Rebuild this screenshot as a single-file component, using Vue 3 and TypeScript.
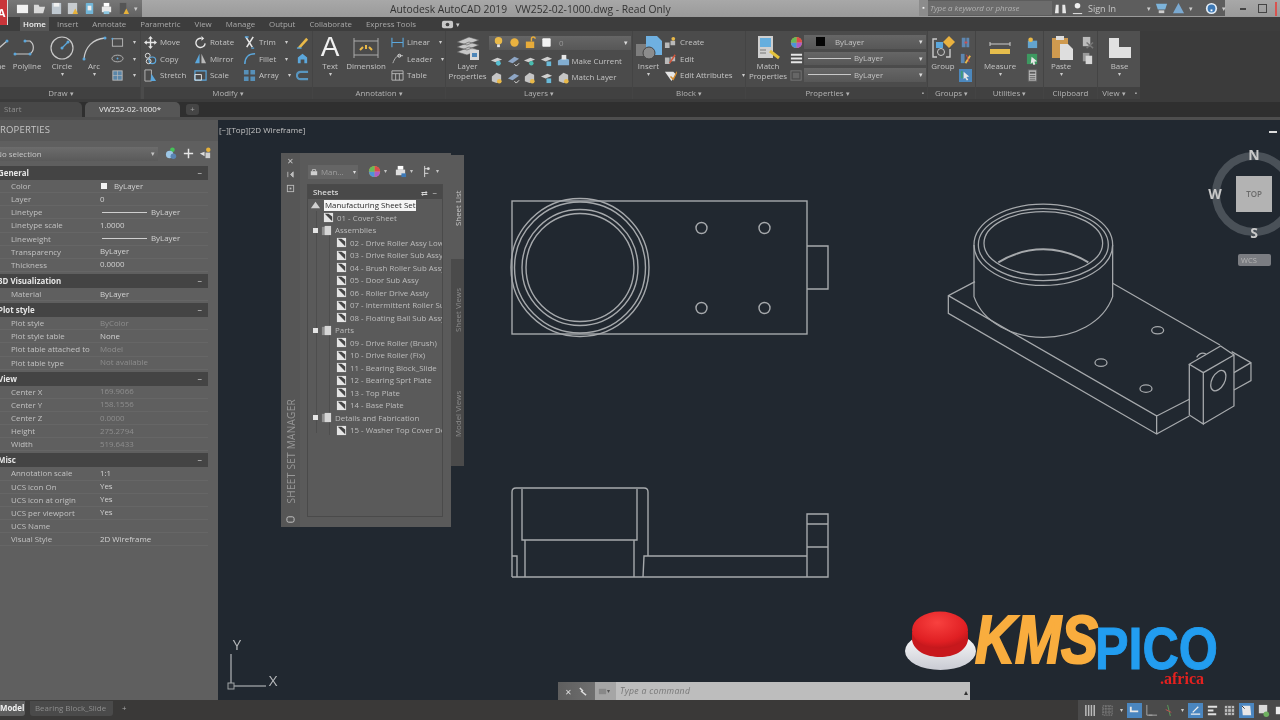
<script setup lang="ts">
const W = '#e6e6e6'
const G = '#b9b9b9'
const B = '#5ba7dc'
const Y = '#e9b949'
const i = (s: string) => s
const icons: Record<string, string> = {
  move: i(`<path d="M7 2v10M2 7h10" stroke="${W}" stroke-width="1.5"/><path d="M7 0l2.5 3h-5zM7 14l2.5-3h-5zM0 7l3-2.5v5zM14 7l-3-2.5v5z" fill="${W}"/>`),
  copy: i(`<circle cx="4" cy="4" r="2.6" fill="none" stroke="${W}"/><circle cx="9" cy="9" r="3.6" fill="none" stroke="${B}" stroke-width="1.3"/><circle cx="5" cy="10" r="2.6" fill="none" stroke="${W}"/>`),
  stretch: i(`<path d="M1 1h7v12H1z" fill="none" stroke="${G}"/><path d="M8 5l5 8H7z" fill="${B}"/>`),
  rotate: i(`<path d="M12 8a5 5 0 1 1-4-5.5" fill="none" stroke="${W}" stroke-width="1.5"/><path d="M8 0l3 2.7L8 5z" fill="${W}"/>`),
  mirror: i(`<path d="M6 2L1 12h5z" fill="${B}"/><path d="M8 2l5 10H8z" fill="${G}"/>`),
  scale: i(`<path d="M1 2h12v10H1z" fill="none" stroke="${B}" stroke-width="1.3"/><path d="M1 6h7v6H1z" fill="none" stroke="${W}"/>`),
  trim: i(`<path d="M3 1l7 11M11 1L4 12" stroke="${W}" stroke-width="1.7"/><path d="M2 1h4M9 13h3" stroke="${B}" stroke-width="1.5"/>`),
  fillet: i(`<path d="M2 13C2 6 6 2 13 2" fill="none" stroke="${B}" stroke-width="1.6"/>`),
  array: i(`<path d="M1 1h5v5H1zM8 1h5v5H8zM1 8h5v5H1zM8 8h5v5H8z" fill="${B}" opacity=".75"/>`),
  erase: i(`<path d="M3 11L11 2l2 2-8 9H2z" fill="${Y}"/><path d="M1 13h5" stroke="${B}" stroke-width="1.5"/>`),
  explode: i(`<path d="M2 12V6l5-4 5 4v6H9V8H5v4z" fill="${B}"/>`),
  offset: i(`<path d="M13 3H5a4 4 0 0 0 0 8h8" fill="none" stroke="${B}" stroke-width="2.4" opacity=".8"/>`),
  rect: i(`<rect x="1.5" y="3" width="11" height="8" fill="none" stroke="${G}"/><circle cx="1.5" cy="3" r="1" fill="${B}"/>`),
  ellipse: i(`<ellipse cx="7" cy="7" rx="6" ry="3.6" fill="none" stroke="${G}"/><circle cx="7" cy="7" r="1" fill="${B}"/>`),
  hatch: i(`<rect x="2" y="2" width="10" height="10" fill="#5b86a8" stroke="${G}"/><path d="M2 7h10M7 2v10" stroke="${G}" stroke-width=".7"/>`),
  linear: i(`<path d="M1 2v10M13 2v10M1 7h12" stroke="${B}" stroke-width="1.2"/>`),
  leader: i(`<path d="M2 12C4 7 6 4 9 4h4" fill="none" stroke="${G}"/><circle cx="9" cy="4" r="1.6" fill="none" stroke="${W}"/>`),
  table: i(`<path d="M1 2h12v10H1zM1 5h12M5 5v7M9 5v7" fill="none" stroke="${G}"/>`),
  bulbs: i(`<circle cx="7" cy="5" r="4" fill="${Y}"/><rect x="5.5" y="9" width="3" height="3" fill="${W}"/>`),
  sun: i(`<circle cx="7" cy="7" r="4.5" fill="#eab23f"/>`),
  lock: i(`<rect x="2" y="6" width="9" height="7" fill="#e8ac3a"/><path d="M8 6V3a2 2 0 0 1 4 0" fill="none" stroke="#e8ac3a" stroke-width="1.5"/>`),
  white: i(`<rect x="2.5" y="2.5" width="9" height="9" rx="1" fill="#f4f4f4"/>`),
  lay1: i(`<path d="M1 7l7-3 5 2-7 3z" fill="#cfcfcf"/><circle cx="9" cy="10" r="2.6" fill="#57bfd2"/>`),
  lay2: i(`<path d="M1 8l7-5 5 2-7 5z" fill="#8ea6c5"/><path d="M8 11l2 2 3-3" stroke="${W}" fill="none"/>`),
  lay3: i(`<path d="M1 7l7-3 5 2-7 3z" fill="#cfcfcf"/><circle cx="9" cy="10" r="2.4" fill="#49bdb0"/>`),
  lay4: i(`<path d="M1 6l7-3 5 2-7 3z" fill="#cfcfcf"/><rect x="7" y="8" width="5" height="5" fill="#69b9d8"/>`),
  lay5: i(`<path d="M2 6l5-4 5 2v7l-5 2-5-2z" fill="#c5c5c5"/><circle cx="10" cy="11" r="2.5" fill="${Y}"/>`),
  make: i(`<path d="M1 7l6-3 6 2v6H1z" fill="#82add0"/><rect x="5" y="1" width="5" height="5" fill="${W}"/>`),
  create: i(`<path d="M1 7h5v6H1zM7 5h5v5H7z" fill="${G}"/><circle cx="10" cy="3" r="2" fill="${Y}"/>`),
  edit: i(`<path d="M1 6h5v7H1zM7 5h5v5H7z" fill="${G}"/><path d="M6 12l6-9" stroke="#d4553a" stroke-width="1.6"/>`),
  attr: i(`<path d="M1 3h9l3 3-5 7z" fill="${W}"/><path d="M7 8l3 3 4-8" stroke="#d58c2b" stroke-width="1.5" fill="none"/>`),
  wheel: i(`<circle cx="7" cy="7" r="6" fill="#e8a23a"/><path d="M7 7V1a6 6 0 0 1 6 6z" fill="#d94c4c"/><path d="M7 7h6a6 6 0 0 1-6 6z" fill="#ad5cc9"/><path d="M7 7v6a6 6 0 0 1-6-6z" fill="#4d93d9"/><path d="M7 7H1a6 6 0 0 1 6-6z" fill="#67bb58"/>`),
  lines: i(`<path d="M1 3h12M1 7h12M1 11h12" stroke="${W}" stroke-width="2"/>`),
  ltype: i(`<rect x="1" y="2" width="11" height="10" fill="none" stroke="#777"/><rect x="3" y="4" width="7" height="6" fill="#666"/>`),
  g1: i(`<path d="M3 2h4v10H3zM8 2h3v10H8z" fill="#5e87b1"/><path d="M6 7h3" stroke="#d34d4d" stroke-width="2"/>`),
  g2: i(`<path d="M2 2h4v10H2z" fill="#5e87b1"/><path d="M7 12l5-8" stroke="${Y}" stroke-width="2"/><path d="M8 3l3 8" stroke="#cf4a4a"/>`),
  g3: i(`<rect width="14" height="14" fill="#4c88bd"/><path d="M5 3l6 5-3 .5 2 3-1.5 1-2-3L5 11z" fill="${W}"/><path d="M2 2h2v8H2z" fill="#3f9b77"/>`),
  u1: i(`<rect x="2" y="5" width="10" height="8" fill="#63a4cf"/><circle cx="5" cy="4" r="2.5" fill="${Y}"/>`),
  u2: i(`<rect x="1" y="2" width="11" height="11" fill="#3d9960"/><path d="M6 5l6 5-3 .5 1 3-2 .5-1-3-2 2z" fill="${W}"/>`),
  u3: i(`<rect x="2.5" y="1" width="9" height="12" fill="#bcbcbc" stroke="#666"/><rect x="4" y="3" width="6" height="2" fill="#5c5c5c"/><path d="M4 7h6M4 9h6M4 11h6" stroke="#666"/>`),
  c1: i(`<rect x="2" y="1" width="8" height="10" fill="#bbb"/><path d="M6 7l7 6M13 7l-7 6" stroke="#777" stroke-width="1.6"/>`),
  c2: i(`<rect x="2" y="1" width="7" height="9" fill="#999"/><rect x="5" y="4" width="7" height="9" fill="#d6d6d6"/>`),
  plus: i(`<path d="M7 2v10M2 7h10" stroke="${W}" stroke-width="1.6"/>`),
}

const qat = [
  `<path d="M1 3h12v9H1z" fill="#f1f1f1"/>`,
  `<path d="M1 3h5l1 2h6l-2 7H1z" fill="#d9d9d9"/>`,
  `<path d="M2 1h10v12H2z" fill="#bfc8d0"/><rect x="4" y="1" width="6" height="4" fill="#f0f0f0"/>`,
  `<path d="M2 1h10v12H2z" fill="#c7cbcf"/><path d="M7 13l3-6 3 6z" fill="#e6b13a"/>`,
  `<rect x="3" y="1" width="8" height="12" rx="1" fill="#72b6d8"/><rect x="5" y="4" width="4" height="5" fill="#eee"/>`,
  `<rect x="2" y="5" width="10" height="6" fill="#e8e8e8"/><rect x="4" y="1" width="6" height="4" fill="#fff"/><rect x="4" y="10" width="6" height="3" fill="#8cc6e0"/>`,
  `<rect x="3" y="1" width="7" height="12" fill="#555"/><path d="M7 13l3-6 3 6z" fill="#e6b13a"/>`,
]

const tabs = ['Insert', 'Annotate', 'Parametric', 'View', 'Manage', 'Output', 'Collaborate', 'Express Tools']

interface Row { l: string; v?: string; dim?: boolean; kind?: 'swatch' | 'line' }
interface Section { t: string; rows: Row[] }
const sections: Section[] = [
  { t: 'General', rows: [
    { l: 'Color', v: 'ByLayer', kind: 'swatch' }, { l: 'Layer', v: '0' },
    { l: 'Linetype', v: 'ByLayer', kind: 'line' }, { l: 'Linetype scale', v: '1.0000' },
    { l: 'Lineweight', v: 'ByLayer', kind: 'line' }, { l: 'Transparency', v: 'ByLayer' }, { l: 'Thickness', v: '0.0000' },
  ] },
  { t: '3D Visualization', rows: [{ l: 'Material', v: 'ByLayer' }] },
  { t: 'Plot style', rows: [
    { l: 'Plot style', v: 'ByColor', dim: true }, { l: 'Plot style table', v: 'None' },
    { l: 'Plot table attached to', v: 'Model', dim: true }, { l: 'Plot table type', v: 'Not available', dim: true },
  ] },
  { t: 'View', rows: [
    { l: 'Center X', v: '169.9066', dim: true }, { l: 'Center Y', v: '158.1556', dim: true }, { l: 'Center Z', v: '0.0000', dim: true },
    { l: 'Height', v: '275.2794', dim: true }, { l: 'Width', v: '519.6433', dim: true },
  ] },
  { t: 'Misc', rows: [
    { l: 'Annotation scale', v: '1:1' }, { l: 'UCS icon On', v: 'Yes' }, { l: 'UCS icon at origin', v: 'Yes' },
    { l: 'UCS per viewport', v: 'Yes' }, { l: 'UCS Name', v: '' }, { l: 'Visual Style', v: '2D Wireframe' },
  ] },
]

interface Node { t: string; lvl: 1 | 2; kind: 'sheet' | 'group' }
const tree: Node[] = [
  { t: '01 - Cover Sheet', lvl: 1, kind: 'sheet' },
  { t: 'Assemblies', lvl: 1, kind: 'group' },
  { t: '02 - Drive Roller Assy Lower', lvl: 2, kind: 'sheet' },
  { t: '03 - Drive Roller Sub Assy', lvl: 2, kind: 'sheet' },
  { t: '04 - Brush Roller Sub Assy', lvl: 2, kind: 'sheet' },
  { t: '05 - Door Sub Assy', lvl: 2, kind: 'sheet' },
  { t: '06 - Roller Drive Assly', lvl: 2, kind: 'sheet' },
  { t: '07 - Intermittent Roller Sub', lvl: 2, kind: 'sheet' },
  { t: '08 - Floating Ball Sub Assy', lvl: 2, kind: 'sheet' },
  { t: 'Parts', lvl: 1, kind: 'group' },
  { t: '09 - Drive Roller (Brush)', lvl: 2, kind: 'sheet' },
  { t: '10 - Drive Roller (Fix)', lvl: 2, kind: 'sheet' },
  { t: '11 - Bearing Block_Slide', lvl: 2, kind: 'sheet' },
  { t: '12 - Bearing Sprt Plate', lvl: 2, kind: 'sheet' },
  { t: '13 - Top Plate', lvl: 2, kind: 'sheet' },
  { t: '14 - Base Plate', lvl: 2, kind: 'sheet' },
  { t: 'Details and Fabrication', lvl: 1, kind: 'group' },
  { t: '15 - Washer Top Cover Detail', lvl: 2, kind: 'sheet' },
]

const holes: [number, number][] = [[701.5, 228], [764.5, 228], [701.5, 308], [764.5, 308]]
const rings = [69, 65.5, 58, 54]

const statusIcons = [
  `<path d="M2 1v12M5 1v12M8 1v12M11 1v12" stroke="#bbb" stroke-width="1.6"/>`,
  `<path d="M2 2h10v10H2zM2 5.3h10M2 8.7h10M5.3 2v10M8.7 2v10" fill="none" stroke="#999" stroke-dasharray="1 1"/>`,
  `<path d="M3 3v5h8" fill="none" stroke="#e8e8e8" stroke-width="2"/>`,
  `<path d="M2 1v11h11" fill="none" stroke="#aaa"/><path d="M4 12h4" stroke="#aaa"/>`,
  `<path d="M6 1l3 12" stroke="#5aa05a"/><path d="M4 6l6 3" stroke="#c45050"/>`,
  `<path d="M2 11h10M4 9l6-6" stroke="#eee" stroke-width="1.4"/>`,
  `<path d="M2 3h10M2 7h6M2 11h9" stroke="#e0e0e0" stroke-width="2"/>`,
  `<path d="M2 2h10v10H2z" fill="#bbb"/><path d="M2 5h10M2 9h10M5 2v10M9 2v10" stroke="#555"/>`,
  `<path d="M2 2h9l1 10H3z" fill="#e8e8e8"/><path d="M2 2l3 3" stroke="#333"/>`,
  `<rect x="2" y="1" width="9" height="9" fill="#d9d9d9"/><circle cx="10" cy="11" r="3" fill="#6db05f"/>`,
  `<rect x="2" y="3" width="10" height="8" fill="#ececec"/>`,
]
</script>

<template>
  <div class="app">
    <header class="chrome">
      <div class="titlebar">
        <div class="logo-a"><span>A</span></div>
        <div class="qat">
          <svg v-for="(q, k) in qat" :key="k" class="ico" viewBox="0 0 14 14" v-html="q" />
          <span class="drop">▾</span>
        </div>
        <div class="title">Autodesk AutoCAD 2019 &nbsp; VW252-02-1000.dwg - Read Only</div>
        <div class="search">
          <span class="grip">▪</span>
          <span class="search-box">Type a keyword or phrase</span>
          <div class="signin">
            <svg class="ico" viewBox="0 0 14 14"><path d="M2 3h3v9H1zM9 3h3l1 9H9z" fill="#e8e8e8"/></svg>
            <svg class="ico" viewBox="0 0 14 14"><circle cx="7" cy="4" r="3" fill="#eee"/><path d="M2 12h10v1H2z" fill="#eee"/></svg>
            <span class="signin-label">Sign In</span>
            <span class="drop">▾</span>
            <svg class="ico" viewBox="0 0 14 14"><path d="M1 2h12l-2 6H3z" fill="#7db4db"/><rect x="4" y="9" width="6" height="3" fill="#ccc"/></svg>
            <svg class="ico" viewBox="0 0 14 14"><path d="M7 1l6 11H1z" fill="#7aa9d1"/></svg>
            <span class="drop">▾</span>
            <svg class="ico help" viewBox="0 0 14 14"><circle cx="7" cy="7" r="6" fill="#e6eef5"/><circle cx="7" cy="7" r="4.2" fill="#3d79b6"/><path d="M6 10h2V8H6z" fill="#fff"/></svg>
            <span class="drop">▾</span>
          </div>
        </div>
        <div class="winctl">
          <span class="min"></span><span class="max"></span><span class="close"></span>
        </div>
      </div>

      <nav class="tabs">
        <span class="tab active">Home</span>
        <span v-for="t in tabs" :key="t" class="tab">{{ t }}</span>
        <svg class="ico tab-ico" viewBox="0 0 14 14"><rect x="1" y="3" width="12" height="8" rx="2" fill="#c9c9c9"/><circle cx="7" cy="7" r="2" fill="#444"/></svg>
        <span class="drop">▾</span>
      </nav>

      <section class="ribbon">
        <div class="panel p-draw">
          <div class="body">
            <div class="big b-line"><svg class="bigico" viewBox="0 0 30 26"><path d="M6 22L24 6" stroke="#c9c9c9" stroke-width="1.3"/><circle cx="24" cy="6" r="1.5" fill="#5ba7dc"/></svg><span>Line</span></div>
            <div class="big b-poly"><svg class="bigico" viewBox="0 0 30 26"><path d="M3 19h15a8 8 0 0 0 0-13h-5" fill="none" stroke="#c9c9c9" stroke-width="1.2"/><circle cx="3" cy="19" r="1.5" fill="#5ba7dc"/><circle cx="13" cy="6" r="1.5" fill="#5ba7dc"/><circle cx="18" cy="19" r="1.5" fill="#5ba7dc"/></svg><span>Polyline</span></div>
            <div class="big b-circle"><svg class="bigico" viewBox="0 0 30 26"><circle cx="15" cy="13" r="11" fill="none" stroke="#c9c9c9" stroke-width="1.2"/><path d="M15 13l6-6" stroke="#5ba7dc" stroke-width="1.2"/><circle cx="15" cy="13" r="1.5" fill="#5ba7dc"/><circle cx="21" cy="7" r="1.5" fill="#5ba7dc"/></svg><span>Circle</span><i>▾</i></div>
            <div class="big b-arc"><svg class="bigico" viewBox="0 0 30 26"><path d="M5 24C6 12 14 4 26 3" fill="none" stroke="#c9c9c9" stroke-width="1.3"/><circle cx="5" cy="24" r="1.5" fill="#5ba7dc"/><circle cx="26" cy="3" r="1.5" fill="#5ba7dc"/></svg><span>Arc</span><i>▾</i></div>
            <div class="col">
              <div class="st"><svg class="ico" viewBox="0 0 14 14" v-html="icons.rect" /><i>▾</i></div>
              <div class="st"><svg class="ico" viewBox="0 0 14 14" v-html="icons.ellipse" /><i>▾</i></div>
              <div class="st"><svg class="ico" viewBox="0 0 14 14" v-html="icons.hatch" /><i>▾</i></div>
            </div>
          </div>
          <div class="ptitle t-draw">Draw <i>▾</i></div>
        </div>

        <div class="panel p-modify">
          <div class="body">
            <div class="col c-m1">
              <div class="st"><svg class="ico" viewBox="0 0 14 14" v-html="icons.move" />Move</div>
              <div class="st"><svg class="ico" viewBox="0 0 14 14" v-html="icons.copy" />Copy</div>
              <div class="st"><svg class="ico" viewBox="0 0 14 14" v-html="icons.stretch" />Stretch</div>
            </div>
            <div class="col c-m2">
              <div class="st"><svg class="ico" viewBox="0 0 14 14" v-html="icons.rotate" />Rotate</div>
              <div class="st"><svg class="ico" viewBox="0 0 14 14" v-html="icons.mirror" />Mirror</div>
              <div class="st"><svg class="ico" viewBox="0 0 14 14" v-html="icons.scale" />Scale</div>
            </div>
            <div class="col c-m3">
              <div class="st"><svg class="ico" viewBox="0 0 14 14" v-html="icons.trim" />Trim<i>▾</i></div>
              <div class="st"><svg class="ico" viewBox="0 0 14 14" v-html="icons.fillet" />Fillet<i>▾</i></div>
              <div class="st"><svg class="ico" viewBox="0 0 14 14" v-html="icons.array" />Array<i>▾</i></div>
            </div>
            <div class="col">
              <div class="st"><svg class="ico" viewBox="0 0 14 14" v-html="icons.erase" /></div>
              <div class="st"><svg class="ico" viewBox="0 0 14 14" v-html="icons.explode" /></div>
              <div class="st"><svg class="ico" viewBox="0 0 14 14" v-html="icons.offset" /></div>
            </div>
          </div>
          <div class="ptitle">Modify <i>▾</i></div>
        </div>

        <div class="panel p-annot">
          <div class="body">
            <div class="big b-text"><span class="big-a">A</span><span>Text</span><i>▾</i></div>
            <div class="big b-dim"><svg class="bigico" viewBox="0 0 30 26"><path d="M3 3v20M27 3v20M3 6h24M3 20h24" stroke="#aaa" fill="none"/><path d="M9 15l3-3M15 10v4M21 15l-3-3" stroke="#e9b949" stroke-width="2"/></svg><span>Dimension</span></div>
            <div class="col">
              <div class="st"><svg class="ico" viewBox="0 0 14 14" v-html="icons.linear" />Linear<i>▾</i></div>
              <div class="st"><svg class="ico" viewBox="0 0 14 14" v-html="icons.leader" />Leader<i>▾</i></div>
              <div class="st"><svg class="ico" viewBox="0 0 14 14" v-html="icons.table" />Table</div>
            </div>
          </div>
          <div class="ptitle">Annotation <i>▾</i></div>
        </div>

        <div class="panel p-layers">
          <div class="body">
            <div class="big b-lp"><svg class="bigico" viewBox="0 0 30 26"><path d="M4 7l12-5 10 3-12 5zM4 12l12-5 10 3-12 5zM4 17l12-5 10 3-12 5z" fill="#c7c7c7" stroke="#555" stroke-width=".6"/><rect x="17" y="15" width="9" height="10" fill="#d8d8d8"/><rect x="19" y="18" width="5" height="4" fill="#4e86b8"/></svg><span>Layer</span><span>Properties</span></div>
            <div class="layer-col">
              <div class="combo layer-combo">
                <svg class="ico" viewBox="0 0 14 14" v-html="icons.bulbs" />
                <svg class="ico" viewBox="0 0 14 14" v-html="icons.sun" />
                <svg class="ico" viewBox="0 0 14 14" v-html="icons.lock" />
                <svg class="ico" viewBox="0 0 14 14" v-html="icons.white" />
                <span class="dimtxt">0</span><i class="end">▾</i>
              </div>
              <div class="layer-row">
                <svg class="ico" viewBox="0 0 14 14" v-html="icons.lay1" />
                <svg class="ico" viewBox="0 0 14 14" v-html="icons.lay2" />
                <svg class="ico" viewBox="0 0 14 14" v-html="icons.lay3" />
                <svg class="ico" viewBox="0 0 14 14" v-html="icons.lay4" />
                <svg class="ico" viewBox="0 0 14 14" v-html="icons.make" />
                <span>Make Current</span>
              </div>
              <div class="layer-row">
                <svg class="ico" viewBox="0 0 14 14" v-html="icons.lay5" />
                <svg class="ico" viewBox="0 0 14 14" v-html="icons.lay2" />
                <svg class="ico" viewBox="0 0 14 14" v-html="icons.lay5" />
                <svg class="ico" viewBox="0 0 14 14" v-html="icons.lay4" />
                <svg class="ico" viewBox="0 0 14 14" v-html="icons.lay5" />
                <span>Match Layer</span>
              </div>
            </div>
          </div>
          <div class="ptitle">Layers <i>▾</i></div>
        </div>

        <div class="panel p-block">
          <div class="body">
            <div class="big b-insert"><svg class="bigico" viewBox="0 0 30 26"><rect x="2" y="9" width="17" height="12" fill="#7d7d7d"/><path d="M12 1h11l5 5v14H12z" fill="#6fb0e0"/><circle cx="15" cy="18" r="6" fill="#8c8c8c" stroke="#444"/></svg><span>Insert</span><i>▾</i></div>
            <div class="col">
              <div class="st"><svg class="ico" viewBox="0 0 14 14" v-html="icons.create" />Create</div>
              <div class="st"><svg class="ico" viewBox="0 0 14 14" v-html="icons.edit" />Edit</div>
              <div class="st"><svg class="ico" viewBox="0 0 14 14" v-html="icons.attr" />Edit Attributes<i>▾</i></div>
            </div>
          </div>
          <div class="ptitle">Block <i>▾</i></div>
        </div>

        <div class="panel p-props">
          <div class="body">
            <div class="big b-match"><svg class="bigico" viewBox="0 0 30 26"><rect x="5" y="1" width="15" height="22" fill="#cfcfcf"/><rect x="7" y="3" width="11" height="9" fill="#65aede"/><path d="M7 15h6M7 18h6" stroke="#777"/><path d="M17 16l9 7" stroke="#e3c23c" stroke-width="3"/></svg><span>Match</span><span>Properties</span></div>
            <div class="col">
              <div class="st"><svg class="ico" viewBox="0 0 14 14" v-html="icons.wheel" /></div>
              <div class="st"><svg class="ico" viewBox="0 0 14 14" v-html="icons.lines" /></div>
              <div class="st"><svg class="ico" viewBox="0 0 14 14" v-html="icons.ltype" /></div>
            </div>
            <div class="combos">
              <div class="combo"><span class="black"></span><span class="txt-a">ByLayer</span><i class="end">▾</i></div>
              <div class="combo"><span class="rule"></span><span>ByLayer</span><i class="end">▾</i></div>
              <div class="combo"><span class="rule"></span><span>ByLayer</span><i class="end">▾</i></div>
            </div>
          </div>
          <div class="ptitle t-props">Properties <i>▾</i><b>▪</b></div>
        </div>

        <div class="panel p-groups">
          <div class="body">
            <div class="big b-group"><svg class="bigico" viewBox="0 0 30 26"><path d="M9 4H5v18h4M18 22h4V14" fill="none" stroke="#c9c9c9" stroke-width="1.4"/><rect x="8" y="7" width="7" height="6" fill="#5ba7dc"/><circle cx="13" cy="17" r="3.5" fill="none" stroke="#c9c9c9"/><path d="M21 1l6 6-6 6-6-6z" fill="#eab23f"/></svg><span>Group</span></div>
            <div class="col">
              <div class="st"><svg class="ico" viewBox="0 0 14 14" v-html="icons.g1" /></div>
              <div class="st"><svg class="ico" viewBox="0 0 14 14" v-html="icons.g2" /></div>
              <div class="st"><svg class="ico" viewBox="0 0 14 14" v-html="icons.g3" /></div>
            </div>
          </div>
          <div class="ptitle">Groups <i>▾</i></div>
        </div>

        <div class="panel p-util">
          <div class="body">
            <div class="big b-measure"><svg class="bigico" viewBox="0 0 30 26"><path d="M5 7v4M25 7v4M5 9h20" stroke="#ccc"/><rect x="5" y="14" width="20" height="5" fill="#e6bd4c"/></svg><span>Measure</span><i>▾</i></div>
            <div class="col">
              <div class="st"><svg class="ico" viewBox="0 0 14 14" v-html="icons.u1" /></div>
              <div class="st"><svg class="ico" viewBox="0 0 14 14" v-html="icons.u2" /></div>
              <div class="st"><svg class="ico" viewBox="0 0 14 14" v-html="icons.u3" /></div>
            </div>
          </div>
          <div class="ptitle">Utilities <i>▾</i></div>
        </div>

        <div class="panel p-clip">
          <div class="body">
            <div class="big b-paste"><svg class="bigico" viewBox="0 0 30 26"><rect x="6" y="3" width="16" height="20" fill="#cf9a4f"/><rect x="10" y="1" width="8" height="4" fill="#ddd"/><path d="M14 9h8l5 5v11H14z" fill="#dedede"/></svg><span>Paste</span><i>▾</i></div>
            <div class="col">
              <div class="st"><svg class="ico" viewBox="0 0 14 14" v-html="icons.c1" /></div>
              <div class="st"><svg class="ico" viewBox="0 0 14 14" v-html="icons.c2" /></div>
            </div>
          </div>
          <div class="ptitle">Clipboard</div>
        </div>

        <div class="panel p-view">
          <div class="body">
            <div class="big b-base"><svg class="bigico" viewBox="0 0 30 26"><path d="M4 3h10v9h12v11H4z" fill="#e0e0e0"/></svg><span>Base</span><i>▾</i></div>
          </div>
          <div class="ptitle t-view">View <i>▾</i> <b>▪</b></div>
        </div>
      </section>

      <div class="doctabs">
        <span class="doc doc-start">Start</span>
        <span class="doc doc-active">VW252-02-1000*</span>
        <span class="doc-plus">+</span>
      </div>
    </header>

    <main class="main">
      <aside class="props">
        <div class="props-title">PROPERTIES</div>
        <div class="props-select">
          <div class="selbox"><span>No selection</span><i>▾</i></div>
          <svg class="ico" viewBox="0 0 14 14"><circle cx="8" cy="3" r="2.5" fill="#45c257"/><circle cx="5" cy="8" r="4" fill="#9cc6e6"/><circle cx="9" cy="10" r="3" fill="#5a84b2"/></svg>
          <svg class="ico" viewBox="0 0 14 14" v-html="icons.plus" />
          <svg class="ico" viewBox="0 0 14 14"><path d="M1 7l5-2v5z" fill="#ddd"/><rect x="7" y="6" width="5" height="6" fill="#cfcfcf"/><circle cx="10" cy="3" r="2.4" fill="#e6b13a"/></svg>
        </div>
        <div class="sections">
          <template v-for="s in sections" :key="s.t">
            <div class="sec-head"><b>{{ s.t }}</b><span>−</span></div>
            <div v-for="r in s.rows" :key="s.t + r.l" class="prow">
              <span class="plabel">{{ r.l }}</span>
              <span class="pvalue" :class="{ dim: r.dim }">
                <span v-if="r.kind === 'swatch'" class="pswatch"></span>
                <span v-if="r.kind === 'line'" class="pline"></span>
                {{ r.v }}
              </span>
            </div>
          </template>
        </div>
      </aside>

      <div class="canvas">
        <div class="vp-label">[−][Top][2D Wireframe]</div>
        <svg class="draw" viewBox="218 120 1062 580">
          <defs>
            <radialGradient id="red" cx="45%" cy="30%" r="75%">
              <stop offset="0" stop-color="#f8413f" />
              <stop offset=".7" stop-color="#e01f23" />
              <stop offset="1" stop-color="#b91519" />
            </radialGradient>
            <linearGradient id="wht" x1="0" y1="0" x2="0" y2="1">
              <stop offset="0" stop-color="#ffffff" />
              <stop offset="1" stop-color="#c9cbd3" />
            </linearGradient>
          </defs>

          <g class="ln">
            <rect x="512" y="201" width="295" height="133" />
            <circle v-for="r in rings" :key="r" cx="580" cy="267.5" :r="r" />
            <circle v-for="(h, k) in holes" :key="k" :cx="h[0]" :cy="h[1]" r="5.5" />
            <path d="M807 246h21v43h-21" />

            <path d="M512 577V492q0-4 4-4h128q4 0 4 4v64" />
            <path d="M512 556h5v21M648 556h-4l-1 21M644 556h163M512 577h316V514h-21v63M807 524h21M807 547h21" />
            <path d="M522 489v51h115v-51M525 540v37M634 540v37" />
          </g>

          <g class="ln iso" transform="translate(930 130) scale(.3333)">
            <ellipse cx="340" cy="344.5" rx="208" ry="122" />
            <ellipse cx="340" cy="344" rx="195" ry="108" />
            <ellipse cx="340" cy="340" rx="178" ry="95" />
            <path class="thick" d="M205 397Q270 358 340 358T475 397" />
            <path d="M132 345V500C160 580 250 622 340 622S520 580 548 500V345" />
            <path d="M135 455L55 497V550L680 912V858L55 497M680 858L778 808M680 912L778 858" />
            <path d="M548 460L870 645M905 665L963 698V752L912 780M963 698L912 728" />
            <path d="M778 703L872 648L912 675L820 728ZM778 703V855L820 882V728M820 882L912 828V675" />
            <ellipse cx="865" cy="752" rx="19" ry="33" transform="rotate(28 865 752)" />
            <ellipse cx="683" cy="601" rx="18" ry="11" />
            <ellipse cx="513" cy="698" rx="18" ry="11" />
            <ellipse cx="648" cy="776" rx="18" ry="11" />
            <path d="M800 682Q812 664 828 672" />
          </g>

          <circle class="ring" cx="1254" cy="194" r="38" />
          <rect class="cube" x="1236" y="176" width="36" height="36" />
          <text class="cube-t" x="1254" y="197">TOP</text>
          <text class="comp" x="1254" y="160">N</text>
          <text class="comp" x="1215" y="199">W</text>
          <text class="comp" x="1254" y="238">S</text>
          <rect class="wcs" x="1238" y="254" width="33" height="12" rx="2" />
          <text class="wcs-t" x="1249" y="263">WCS</text>
          <path class="dash" d="M1269 132h8" />

          <path class="ucs" d="M231 654V686H266" />
          <rect class="ucs-box" x="228" y="683" width="6" height="6" />
          <text class="ucs-t" x="237" y="650">Y</text>
          <text class="ucs-t" x="273" y="686">X</text>

          <ellipse cx="940.5" cy="651" rx="35.5" ry="19" fill="url(#wht)" />
          <path d="M912 632V640C914 651 926 657 940 657S966 651 968 640V632Z" fill="#c8181d" />
          <ellipse cx="940" cy="630" rx="28" ry="18.5" fill="url(#red)" />
          <text class="kms" x="975" y="663" textLength="123" lengthAdjust="spacingAndGlyphs">KMS</text>
          <text class="pico" x="1095" y="669" textLength="123" lengthAdjust="spacingAndGlyphs">PICO</text>
          <text class="africa" x="1160" y="684">.africa</text>
        </svg>

        <div class="ssm">
          <div class="ssm-strip">
            <span class="x">✕</span>
            <svg class="tiny" viewBox="0 0 10 10"><path d="M2 2v6M5 5l3-3v6z" fill="#bbb" stroke="#bbb"/></svg>
            <svg class="tiny" viewBox="0 0 10 10"><rect x="1.5" y="1.5" width="7" height="7" fill="none" stroke="#bbb"/><rect x="4" y="4" width="2" height="2" fill="#bbb"/></svg>
            <span class="ssm-name">SHEET SET MANAGER</span>
            <svg class="tiny" viewBox="0 0 10 10"><rect x="1" y="2" width="8" height="6" rx="2" fill="none" stroke="#ccc"/></svg>
          </div>
          <div class="ssm-body">
            <div class="ssm-tools">
              <div class="ssm-drop">
                <svg class="tiny lockico" viewBox="0 0 10 10"><rect x="1" y="4" width="8" height="5" fill="#cfcfcf"/><path d="M3 4V2h4v2" fill="none" stroke="#cfcfcf"/></svg>
                <span>Man...</span><i>▾</i>
              </div>
              <svg class="ico" viewBox="0 0 14 14" v-html="icons.wheel" /><i>▾</i>
              <svg class="ico" viewBox="0 0 14 14"><rect x="2" y="5" width="10" height="6" fill="#ddd"/><rect x="4" y="1" width="6" height="4" fill="#fff"/><rect x="8" y="9" width="5" height="4" fill="#3d79b6"/></svg><i>▾</i>
              <svg class="ico" viewBox="0 0 14 14"><path d="M5 1v12M5 4h4M5 9h4" stroke="#ddd"/><circle cx="9" cy="4" r="1.5" fill="#ddd"/></svg><i>▾</i>
            </div>
            <div class="tree">
              <div class="tree-head"><b>Sheets</b><span class="th-r">⇄ &nbsp;−</span></div>
              <div class="tree-list">
                <div class="node root">
                  <svg class="nico" viewBox="0 0 12 12"><path d="M1 9l5-7 5 7z" fill="#cfcfcf"/></svg>
                  <span class="sel">Manufacturing Sheet Set</span>
                </div>
                <div v-for="n in tree" :key="n.t" class="node" :class="['l' + n.lvl, n.kind]">
                  <span v-if="n.kind === 'group'" class="expand"></span>
                  <svg v-if="n.kind === 'sheet'" class="nico" viewBox="0 0 12 12"><rect x="1" y="1" width="10" height="10" fill="#e4e4e4"/><path d="M2 2l8 8V5L6 2z" fill="#444"/></svg>
                  <svg v-else class="nico" viewBox="0 0 12 12"><rect x="1" y="2" width="8" height="9" fill="#8f8f8f"/><rect x="4" y="1" width="7" height="10" fill="#d6d6d6"/></svg>
                  <span class="ntext">{{ n.t }}</span>
                </div>
              </div>
            </div>
          </div>
          <div class="ssm-tabs">
            <span class="vt vt-a">Sheet List</span>
            <span class="vt vt-b">Sheet Views</span>
            <span class="vt vt-c">Model Views</span>
          </div>
        </div>

        <div class="cmd">
          <div class="cmd-h"><span>✕</span><svg class="tiny" viewBox="0 0 10 10"><path d="M2 1l3 3-1 1 5 4" stroke="#ddd" stroke-width="1.6" fill="none"/></svg></div>
          <div class="cmd-in">
            <span class="cmd-btn"><svg class="tiny" viewBox="0 0 10 10"><path d="M1 2h8v6H1z" fill="#888"/></svg>▾</span>
            <span class="cmd-ph">Type a command</span>
            <span class="cmd-up">▴</span>
          </div>
        </div>
      </div>
    </main>

    <footer class="status">
      <span class="st-tab st-model">Model</span>
      <span class="st-tab st-bb">Bearing Block_Slide</span>
      <span class="st-plus">+</span>
      <div class="st-icons">
        <template v-for="(s, k) in statusIcons" :key="k">
          <svg class="sico" :class="{ on: k === 2 || k === 5 || k === 8 }" viewBox="0 0 14 14" v-html="s" />
          <span v-if="k === 1 || k === 4" class="st-caret">▾</span>
        </template>
      </div>
    </footer>
  </div>
</template>

<style>
html, body { margin: 0; background: #212830; overflow: hidden; }
</style>

<style scoped>
.app { width: 1280px; height: 720px; display: flex; flex-direction: column; overflow: hidden; font-family: "Open Sans", "Liberation Sans", sans-serif; font-size: 7.9px; color: #c4c4c4; background: #212830; }
i { font-style: normal; }
.chrome { flex: none; display: flex; flex-direction: column; filter: blur(.45px); }
.ico { width: 13px; height: 13px; flex: none; }
.drop { font-size: 7px; color: #ccc; }

.titlebar { height: 17px; display: flex; align-items: flex-start; background: linear-gradient(#a8a8a8, #9a9a9a); position: relative; }
.logo-a { position: absolute; left: -4px; top: 0; width: 11px; height: 25px; background: #c9353a; color: #fff; display: flex; align-items: center; justify-content: center; font-size: 11px; font-weight: 700; border-right: 1px solid #ddd; z-index: 2; }
.qat { width: 135px; height: 17px; margin-left: 7px; padding-left: 9px; box-sizing: border-box; display: flex; align-items: center; gap: 3.8px; background: linear-gradient(#777, #626262); }
.title { position: absolute; left: 390px; top: 3px; font-size: 10.3px; line-height: 13px; color: #333; white-space: nowrap; }
.search { position: absolute; left: 919px; top: 0; height: 16px; display: flex; align-items: center; width: 306px; background: #5d5d5d; }
.grip { width: 9px; flex: none; text-align: center; color: #eee; font-size: 7px; background: #8c8c8c; height: 16px; line-height: 16px; }
.search-box { width: 124px; flex: none; height: 14px; line-height: 14px; padding-left: 2px; box-sizing: border-box; background: #6c6c6c; color: #b2b2b2; font-style: italic; }
.signin { display: flex; align-items: center; gap: 4px; padding-left: 2px; flex: 1; min-width: 0; color: #c8c8c8; }
.signin-label { width: 55px; font-size: 9px; flex: none; }
.help { margin-left: 8px; }
.winctl { position: absolute; right: 0; top: 0; height: 17px; width: 40px; display: flex; align-items: center; }
.min { width: 6px; height: 2px; background: #444; margin-right: 12px; }
.max { width: 7px; height: 7px; border: 1px solid #444; margin-right: 8px; }
.close { width: 2px; height: 14px; background: #d9534f; }

.tabs { height: 14px; display: flex; align-items: center; background: #3d3d3d; padding-left: 20px; color: #a9a9a9; }
.tab { padding: 0 7px; line-height: 14px; white-space: nowrap; }
.tab.active { width: 29px; box-sizing: border-box; padding: 0; text-align: center; background: #565656; color: #f2f2f2; font-weight: 600; margin-right: 1px; }
.tab-ico { margin-left: 18px; margin-right: 2px; }

.ribbon { height: 71px; display: flex; background: #3b3b3b; box-sizing: border-box; padding-bottom: 3px; }
.panel { flex: none; display: flex; flex-direction: column; background: #4b4b4b; overflow: hidden; box-sizing: border-box; }
.panel + .panel { border-left: 1px solid #444; }
.body { height: 56px; display: flex; }
.ptitle { height: 12px; line-height: 12px; background: #414141; text-align: center; color: #b4b4b4; white-space: nowrap; position: relative; }
.ptitle i { font-size: 7px; }
.ptitle b { position: absolute; right: 3px; font-size: 6px; font-weight: 400; }
.t-draw { padding-right: 18px; }
.t-props { padding-right: 18px; }
.t-view { padding-right: 10px; }
.p-draw { width: 140px; }
.p-modify { width: 172px; padding-left: 3px; }
.p-annot { width: 133px; }
.p-layers { width: 187px; }
.p-block { width: 113px; }
.p-props { width: 182px; }
.p-groups { width: 48px; background: #505050; }
.p-util { width: 68px; background: #505050; }
.p-clip { width: 54px; background: #505050; }
.p-view { width: 43px; background: #505050; }
.big { flex: none; display: flex; flex-direction: column; align-items: center; padding-top: 4px; box-sizing: border-box; line-height: 10px; white-space: nowrap; }
.big i { font-size: 6px; line-height: 7px; color: #ccc; }
.bigico { width: 30px; height: 26px; flex: none; }
.big-a { height: 26px; font-size: 28px; line-height: 24px; color: #f1f1f1; font-family: "Liberation Sans", sans-serif; }
.b-line { width: 22px; margin-left: -13px; }
.b-poly { width: 36px; }
.b-circle { width: 34px; }
.b-arc { width: 30px; }
.b-text { width: 34px; }
.b-dim { width: 38px; }
.b-lp { width: 43px; }
.b-insert { width: 31px; }
.b-match { width: 44px; }
.b-group { width: 30px; }
.b-measure { width: 48px; }
.b-paste { width: 34px; }
.b-base { width: 43px; }
.col { display: flex; flex-direction: column; padding-top: 3px; flex: none; }
.st { height: 16.5px; display: flex; align-items: center; gap: 3px; white-space: nowrap; }
.st i { font-size: 6px; margin-left: 6px; color: #ccc; }
.c-m1 { width: 50px; }
.c-m2 { width: 49px; }
.c-m3 { width: 53px; }
.p-annot .col { margin-left: 6px; }
.p-draw .col { margin-left: 2px; }
.p-groups .col { margin-left: 1px; }
.p-util .col { margin-left: 2px; }
.p-clip .col { margin-left: 3px; }
.layer-col { flex: 1; min-width: 0; padding-top: 5px; padding-right: 1px; }
.layer-combo { height: 13px; margin-bottom: 3px; gap: 0; }
.layer-row { height: 16.5px; display: flex; align-items: center; gap: 3.7px; padding-left: 1px; white-space: nowrap; }
.layer-row span { margin-left: -2px; }
.combo { display: flex; align-items: center; gap: 3px; height: 13.5px; padding: 0 2px 0 3px; background: linear-gradient(#666, #575757); position: relative; white-space: nowrap; overflow: hidden; }
.combo .end { position: absolute; right: 3px; font-size: 7px; color: #ddd; }
.dimtxt { color: #999; margin-left: 3px; }
.combos { flex: 1; padding: 4px 1px 0 1px; display: flex; flex-direction: column; gap: 3px; min-width: 0; }
.black { width: 9px; height: 9px; background: #050505; margin: 0 7px 0 9px; }
.rule { width: 43px; height: 1px; background: #c9c9c9; margin-left: 1px; }
.combo .rule + span { margin-left: 0; }
.doctabs { background: #2f2f2f; border-bottom: 3px solid #4e4e4e; display: flex; align-items: flex-end; height: 15px; color: #a5a5a5; }
.doc { height: 15px; line-height: 15px; }
.doc-start { width: 82px; padding-left: 4px; box-sizing: border-box; background: #484848; color: #8e8e8e; border-radius: 0 5px 0 0; }
.doc-active { width: 95px; margin-left: 3px; padding-left: 14px; box-sizing: border-box; background: #565656; color: #e8e8e8; border-radius: 5px 5px 0 0; }
.doc-plus { margin-left: 6px; width: 13px; height: 11px; line-height: 11px; text-align: center; background: #454545; border-radius: 3px; margin-bottom: 2px; }

.main { flex: 1; min-height: 0; display: flex; }
.props { width: 218px; flex: none; background: #5f5f5f; overflow: hidden; filter: blur(.45px); }
.props-title { height: 21px; line-height: 19px; font-size: 9.5px; margin-left: -6px; color: #c5c5c5; background: #585858; letter-spacing: .2px; }
.props-select { height: 25px; display: flex; align-items: center; gap: 4px; }
.selbox { width: 158px; height: 14px; box-sizing: border-box; padding: 0 3px 0 0; margin-right: 3px; display: flex; justify-content: space-between; align-items: center; background: linear-gradient(#6c6c6c, #5a5a5a); flex: none; }
.selbox span { margin-left: -4px; color: #c8c8c8; }
.selbox i { font-size: 7px; }
.sections { width: 208px; }
.sec-head { height: 14px; margin-top: 2px; display: flex; justify-content: space-between; align-items: center; padding-right: 6px; background: #444; color: #e6e6e6; line-height: 14px; }
.sec-head:first-child { margin-top: 0; }
.sec-head b { font-weight: 700; margin-left: -2px; }
.prow { height: 13.15px; line-height: 13px; display: flex; box-sizing: border-box; border-bottom: 1px solid #666; white-space: nowrap; }
.plabel { width: 100px; padding-left: 11px; box-sizing: border-box; color: #c2c2c2; flex: none; }
.pvalue { color: #d2d2d2; display: flex; align-items: center; gap: 4px; }
.pvalue.dim { color: #8e8e8e; }
.pswatch { width: 6px; height: 6px; background: #f4f4f4; margin-left: 1px; margin-right: 3px; }
.pline { width: 45px; height: 1px; background: #cfcfcf; margin-left: 2px; }

.canvas { flex: 1; position: relative; background: #212830; overflow: hidden; }
.draw { position: absolute; left: 0; top: 0; width: 1062px; height: 580px; filter: blur(.3px); }
.vp-label { position: absolute; left: 1px; top: 4px; color: #c4c4c4; font-size: 8px; filter: blur(.3px); }
.ln { fill: none; stroke: #a6a9ac; stroke-width: 1.4; }
.iso { stroke-width: 3.8; }
.thick { stroke-width: 6; }
.ring { fill: none; stroke: #4a5158; stroke-width: 8; }
.cube { fill: #b3b3b3; }
.cube-t { font-size: 8px; fill: #6a6a6a; text-anchor: middle; font-family: "Open Sans", sans-serif; font-weight: 600; }
.comp { font-size: 14px; font-weight: 700; fill: #c9c9c9; text-anchor: middle; font-family: "Open Sans", sans-serif; }
.wcs { fill: #7b7d82; }
.wcs-t { font-size: 7.5px; fill: #b5b5b5; text-anchor: middle; font-family: "Open Sans", sans-serif; }
.dash { stroke: #dcdcdc; stroke-width: 2; }
.ucs { fill: none; stroke: #8e9296; stroke-width: 1.6; }
.ucs-box { fill: #2a3037; stroke: #a0a3a6; }
.ucs-t { font-size: 15px; fill: #b6b8ba; font-family: "Open Sans", sans-serif; text-anchor: middle; }
.kms { font: italic 700 68px "Liberation Sans", sans-serif; fill: #f9ad3e; stroke: #f9ad3e; stroke-width: 2.2; }
.pico { font: 700 60px "Liberation Sans", sans-serif; fill: #229df0; stroke: #229df0; stroke-width: 1; }
.africa { font: 700 16px "Liberation Serif", serif; fill: #e5211f; }

.ssm { position: absolute; left: 63px; top: 33px; display: flex; align-items: flex-start; filter: blur(.45px); }
.ssm-strip { width: 19px; height: 374px; box-sizing: border-box; background: #565656; display: flex; flex-direction: column; align-items: center; padding: 3px 0; gap: 5px; color: #c4c4c4; }
.x { font-size: 8px; line-height: 9px; }
.tiny { width: 9px; height: 9px; flex: none; }
.ssm-name { writing-mode: vertical-rl; transform: rotate(180deg); font-size: 10px; letter-spacing: .3px; margin-top: auto; margin-bottom: 7px; color: #989898; white-space: nowrap; }
.ssm-body { width: 151px; height: 374px; box-sizing: border-box; background: #5a5a5a; padding: 12px 8px 10px 7px; display: flex; flex-direction: column; }
.ssm-tools { height: 19px; display: flex; align-items: flex-start; gap: 3px; padding-left: 1px; }
.ssm-tools i { font-size: 6px; line-height: 13px; margin-right: 4px; }
.ssm-drop { width: 50px; height: 14px; background: #656565; display: flex; align-items: center; padding: 0 2px; box-sizing: border-box; color: #9f9f9f; margin-right: 7px; flex: none; gap: 3px; }
.ssm-drop i { margin: 0 0 0 auto; color: #ddd; }
.lockico { width: 8px; height: 8px; }
.tree { flex: 1; border: 1px solid #4a4a4a; min-height: 0; overflow: hidden; }
.tree-head { height: 14px; display: flex; justify-content: space-between; align-items: center; padding: 0 5px; background: #494949; color: #d8d8d8; }
.tree-head b { font-weight: 600; }
.th-r { font-size: 8px; }
.tree-list { background: linear-gradient(#4e4e4e, #4e4e4e) no-repeat 8px 12px / 1px 222px, linear-gradient(#4e4e4e, #4e4e4e) no-repeat 21px 36px / 1px 200px; }
.node { height: 12.5px; display: flex; align-items: center; white-space: nowrap; color: #bdbdbd; overflow: hidden; }
.nico { width: 11px; height: 11px; flex: none; }
.root { padding-left: 2px; gap: 3px; }
.sel { background: #f5f5f5; color: #2a2a2a; padding: 0 1px; line-height: 10.5px; }
.l1 { padding-left: 15px; }
.l1.sheet .nico { margin-right: 3px; }
.l1.group { padding-left: 5px; }
.l1.group .nico { margin-left: 3px; margin-right: 3px; }
.l2 { padding-left: 28px; }
.l2 .nico { margin-right: 3px; }
.expand { width: 5px; height: 5px; background: #e4e4e4; flex: none; }
.ssm-tabs { width: 13px; display: flex; flex-direction: column; margin-top: 2px; }
.vt { writing-mode: vertical-rl; transform: rotate(180deg); display: flex; align-items: center; justify-content: flex-start; box-sizing: border-box; white-space: nowrap; width: 13px; }
.vt-a { height: 104px; background: #5a5a5a; color: #c8c8c8; padding-top: 33px; }
.vt-b { height: 129px; background: #4a4a4a; color: #8a8a8a; padding-top: 56px; }
.vt-c { height: 78px; background: #4a4a4a; color: #8a8a8a; padding-top: 29px; }
.cmd { position: absolute; left: 340px; bottom: 0; width: 412px; height: 18px; display: flex; filter: blur(.3px); }
.cmd-h { width: 37px; display: flex; align-items: center; gap: 6px; padding-left: 7px; box-sizing: border-box; background: linear-gradient(90deg, #5e5e5e, #6f6f6f); color: #ddd; font-size: 8px; }
.cmd-in { flex: 1; background: #bdbdbd; display: flex; align-items: center; position: relative; }
.cmd-btn { width: 21px; display: flex; align-items: center; background: #a5a5a5; height: 18px; font-size: 6px; color: #555; padding-left: 3px; box-sizing: border-box; }
.cmd-ph { margin-left: 4px; font-style: italic; color: #777; font-size: 8.7px; letter-spacing: .3px; }
.cmd-up { position: absolute; right: 2px; color: #333; font-size: 8px; }

.status { height: 20px; flex: none; display: flex; align-items: center; background: #3a3938; position: relative; filter: blur(.45px); color: #a8a8a8; }
.st-tab { height: 15px; line-height: 15px; margin-bottom: 4px; }
.st-model { width: 25px; background: #5f5f5f; color: #f0f0f0; font-weight: 700; overflow: hidden; border-radius: 0 0 3px 0; }
.st-bb { margin-left: 5px; width: 83px; padding-left: 5px; box-sizing: border-box; background: #4a4a4a; color: #8e8e8e; white-space: nowrap; border-radius: 0 0 3px 3px; }
.st-plus { margin-left: 9px; margin-bottom: 4px; }
.st-icons { position: absolute; right: 0; top: 0; bottom: 0; width: 202px; padding-left: 5px; box-sizing: border-box; display: flex; align-items: center; gap: 2px; background: #4a4a4a; overflow: hidden; }
.st-caret { width: 8px; flex: none; text-align: center; font-size: 6px; color: #ccc; }
.sico { width: 15px; height: 15px; flex: none; padding: 1px; box-sizing: border-box; }
.sico.on { background: #4a86c0; }
</style>
